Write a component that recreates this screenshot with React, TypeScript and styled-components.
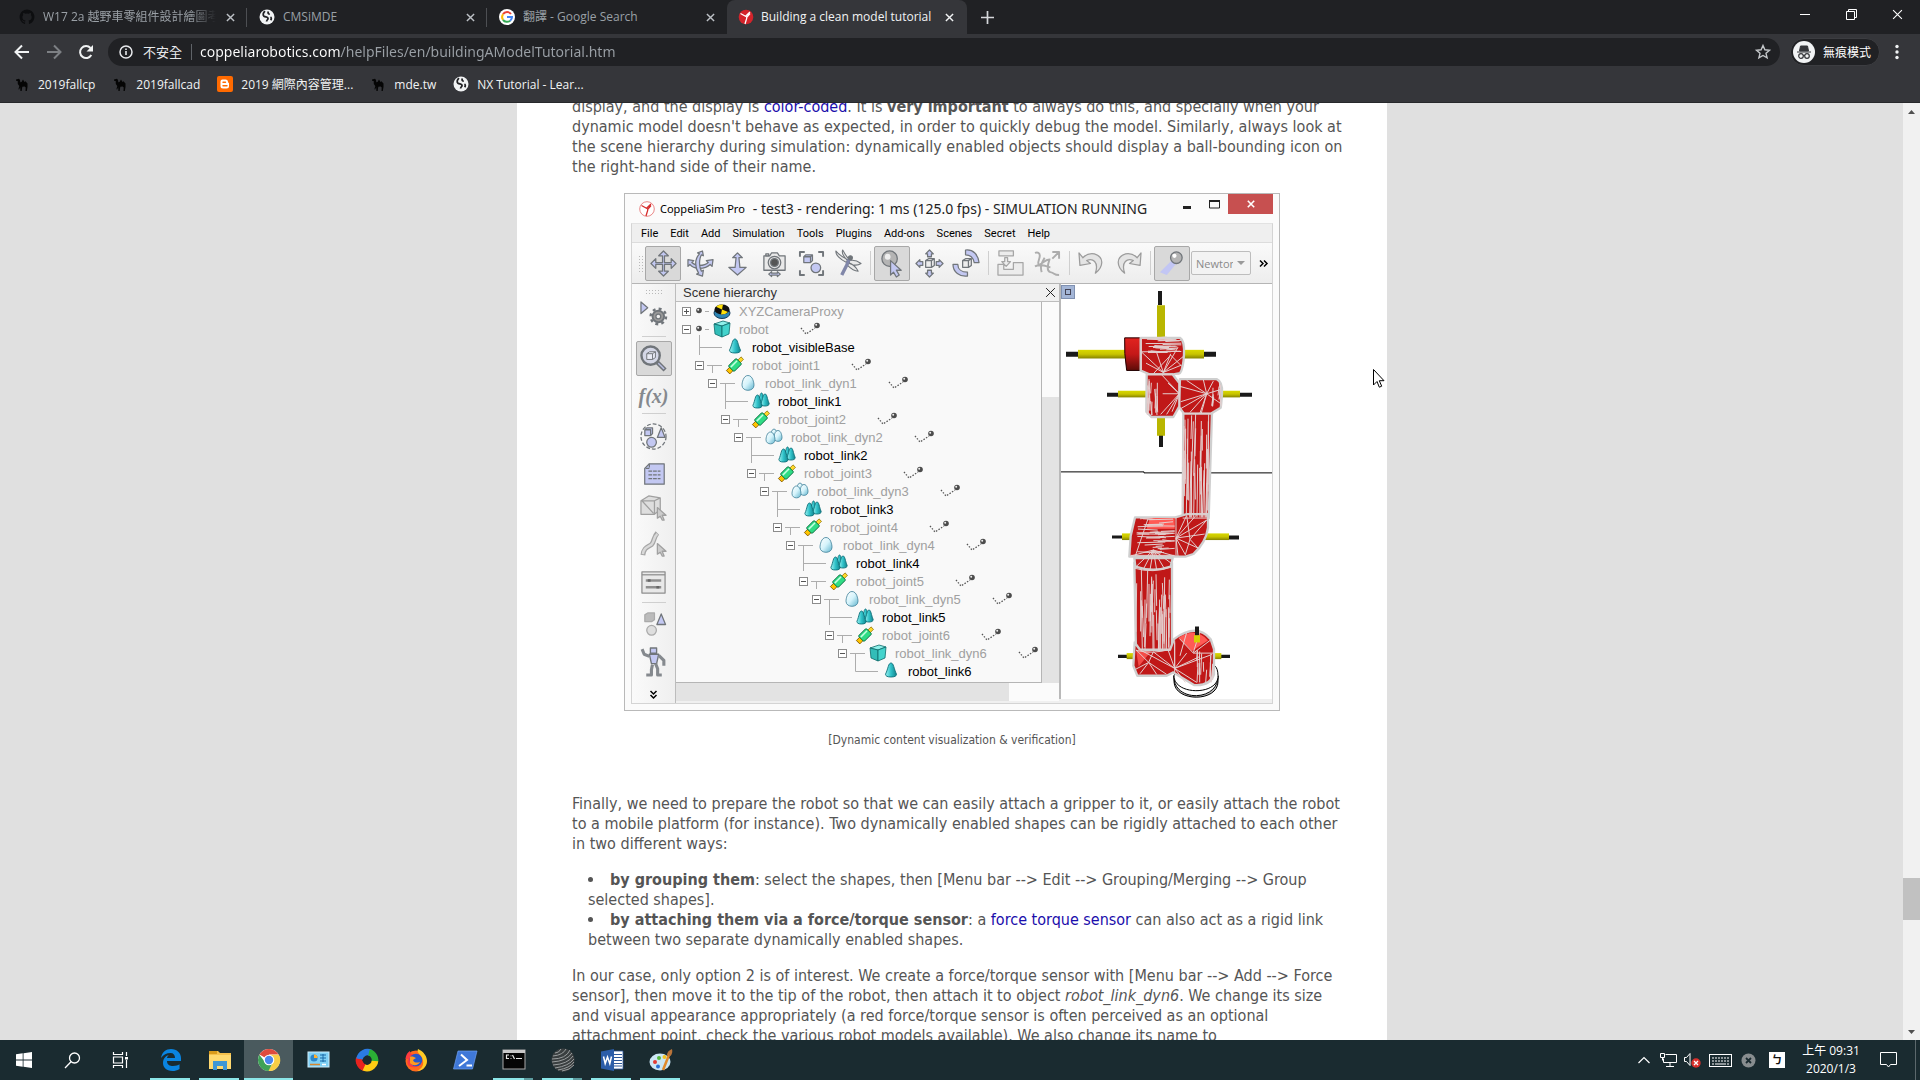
import React from "react";
import styled, { createGlobalStyle, css } from "styled-components";

const UI = `"Open Sans", "Noto Sans CJK TC", sans-serif`;
const BODY = `"DejaVu Sans Condensed", "DejaVu Sans", "Noto Sans CJK TC", sans-serif`;

const Global = createGlobalStyle`
  * { box-sizing: border-box; }
  html, body, #root { height: 100%; margin: 0; }
  body { font-family: ${UI}; background: #e0e0e0; overflow: hidden; }
  button { border: 0; padding: 0; margin: 0; background: none; color: inherit; font: inherit; }
  svg { display: block; flex: none; overflow: visible; }
`;

const Screen = styled.div`display: flex; flex-direction: column; height: 100vh;`;

/* ---------- browser chrome ---------- */
const TabStrip = styled.header`
  display: flex; height: 34px; padding-left: 7px; background: #202124; color: #9aa0a6;
`;
const Tab = styled.div<{ $active?: boolean; $line?: boolean }>`
  position: relative; display: flex; align-items: center; width: 240px; padding: 0 11px 0 12px; gap: 8px; font-size: 12px;
  ${(p) => p.$active && css`background: #35363a; color: #f1f3f4; border-radius: 8px 8px 0 0; padding: 0 12px 0 11px; gap: 7px;`}
  ${(p) => p.$line && css`&::after { content: ""; position: absolute; right: 0; top: 8px; width: 1px; height: 19px; background: #4d4f53; }`}
`;
const TabTitle = styled.button<{ $fade?: boolean }>`
  flex: 1; overflow: hidden; white-space: nowrap; text-align: left; line-height: 20px;
  ${(p) => p.$fade && css`mask-image: linear-gradient(90deg, #000 85%, transparent);`}
`;
const IconButton = styled.button<{ $w: number; $color?: string }>`
  display: flex; align-items: center; justify-content: center; flex: none; width: ${(p) => p.$w}px; height: 100%;
  color: ${(p) => p.$color || "#f1f3f4"};
`;
const WindowButtons = styled.div`display: flex; height: 28px; margin-left: auto;`;
const Toolbar = styled.div`
  display: flex; align-items: center; height: 36px; padding: 4px 6px; background: #35363a;
`;
const Omnibox = styled.div`
  display: flex; align-items: center; flex: 1; height: 28px; margin: 0 10px 0 6px; padding: 0 8px 0 11px;
  border-radius: 14px; background: #202124; color: #e8eaed; font-size: 13px;
`;
const Insecure = styled.span`margin-left: 10px; padding-right: 9px; border-right: 1px solid #5f6368; line-height: 16px; white-space: nowrap;`;
const Url = styled.input`
  flex: 1; margin-left: 8px; padding: 0; border: 0; outline: 0; font: 14px/20px "Noto Sans", ${UI}; color: transparent;
  background: linear-gradient(90deg, #ffffff 141px, #9aa0a6 141px); background-clip: text; -webkit-background-clip: text;
`;
const Incognito = styled.button`
  display: flex; align-items: center; gap: 8px; height: 28px; padding: 0 8px 0 2px; border: 1px solid #3c3d41; border-radius: 14px;
  background: #202124; color: #fff; font-size: 12px;
`;
const Bookmarks = styled.nav`
  display: flex; align-items: center; height: 33px; padding: 0 14px 4px; gap: 17px; background: #35363a;
  border-bottom: 1px solid #27282b; color: #f1f3f4; font-size: 12px;
`;
const Bookmark = styled.a`display: flex; align-items: center; gap: 8px; color: inherit; text-decoration: none; white-space: nowrap;`;

/* ---------- page ---------- */
const Viewport = styled.div`display: flex; flex: 1; min-height: 0; background: #e0e0e0;`;
const Page = styled.main`flex: 1; overflow: hidden; display: flex; justify-content: center; align-items: flex-start;`;
const Article = styled.article`
  width: 870px; margin: -6px 0 0 1px; padding: 0 40px 0 55px; background: #fff; color: #555;
  font: 16px/20px ${BODY}; white-space: nowrap;
`;
const P = styled.p`margin: 0 0 16px;`;
const Link = styled.a`color: #1a0dab; text-decoration: none;`;
const List = styled.ul`margin: 0 0 16px; padding-left: 16px; list-style-position: inside;`;
const Figure = styled.figure`margin: 0 0 47px 52px; width: 656px;`;
const Caption = styled.figcaption`margin-top: 22px; text-align: center; font-size: 12px; line-height: 14px;`;
const Scrollbar = styled.aside`display: flex; flex-direction: column; width: 17px; background: #f1f1f1;`;
const ScrollTrack = styled.div`flex: 1; display: flex; flex-direction: column;`;
const ScrollStep = styled.button`display: flex; align-items: center; justify-content: center; width: 17px; height: 17px;`;
const ScrollSpace = styled.div<{ $grow: number }>`flex: ${(p) => p.$grow};`;
const ScrollThumb = styled.div`height: 42px; background: #c1c1c1;`;

/* ---------- simulator window ---------- */
const Sim = styled.section`
  height: 518px; border: 1px solid #b9b9b9; background: #fbfbfb; padding: 0 6px 6px; color: #000;
  display: flex; flex-direction: column; font-family: ${UI};
`;
const SimTitle = styled.div`display: flex; align-items: center; height: 29px; padding-left: 8px; font: 14px "Noto Sans", ${UI}; color: #222;`;
const AppName = styled.span`margin: 0 8px 0 5px; font-size: 11px; color: #000;`;
const SimControls = styled.div`display: flex; align-self: flex-start; margin-left: auto;`;
const CloseBox = styled.button`display: flex; align-items: center; justify-content: center; width: 45px; height: 20px; background: #c75050;`;
const SimBody = styled.div`flex: 1; display: flex; flex-direction: column; border: 1px solid #d4d4d4; border-top-color: #e2e2e2; background: #f0f0f0; min-height: 0;`;
const MenuBar = styled.div`display: flex; height: 18px; padding-left: 9px; gap: 12px; align-items: center; background: #efefef; font: 11px Roboto, ${UI};`;
const SimTools = styled.div`
  display: flex; align-items: center; height: 42px; padding-left: 6px; gap: 1px; border-top: 1px solid #dcdcdc; border-bottom: 1px solid #b5b5b5;
  background: linear-gradient(#fafafa, #ededed);
`;
const ToolButton = styled.button<{ $on?: boolean }>`
  display: flex; align-items: center; justify-content: center; flex: none; width: 36px; height: 35px;
  border: 1px solid ${(p) => (p.$on ? "#a8a8a8" : "transparent")}; border-radius: 2px;
  background: ${(p) => (p.$on ? "#d9d9d9" : "transparent")};
`;
const Sep = styled.i<{ $side?: boolean }>`
  flex: none; background: #cfcfcf;
  ${(p) => (p.$side ? css`width: 24px; height: 1px;` : css`width: 1px; height: 24px; margin: 0 2px 0 3px;`)}
`;
const Grip = styled.i<{ $side?: boolean }>`
  flex: none; width: ${(p) => (p.$side ? 17 : 5)}px; height: ${(p) => (p.$side ? 5 : 17)}px; margin-right: ${(p) => (p.$side ? 0 : 1)}px;
  background: radial-gradient(circle, #b9b9b9 1px, transparent 1px) 0 0 / 3px 3px;
`;
const Engine = styled.select`
  appearance: none; width: 60px; height: 24px; padding: 0 17px 0 4px; border: 1px solid #bdbdbd; border-radius: 2px;
  font: 11px ${UI}; color: #8a8a8a; background: #f3f3f3;
`;
const EngineBox = styled.label`
  position: relative; display: flex;
  &::after { content: ""; position: absolute; right: 6px; top: 10px; border: 4px solid transparent; border-top-color: #9a9a9a; border-bottom: 0; }
`;
const SimMain = styled.div`flex: 1; display: flex; min-height: 0;`;
const Side = styled.div`
  display: flex; flex-direction: column; align-items: center; width: 44px; padding-top: 5px; border-right: 1px solid #bcbcbc;
  background: linear-gradient(90deg, #fafafa, #efefef);
`;
const SideSlot = styled.div<{ $h: number }>`display: flex; align-items: center; justify-content: center; flex: none; height: ${(p) => p.$h}px;`;
const Hierarchy = styled.div`display: flex; flex-direction: column; width: 383px; margin-bottom: 2px; font: 13px "Liberation Sans", sans-serif; color: #333;`;
const HierarchyHead = styled.div`display: flex; align-items: center; justify-content: space-between; height: 18px; padding-left: 7px; border-bottom: 1px solid #bdbdbd; background: #f0f0f0;`;
const TreeArea = styled.div`display: flex; flex: 1; min-height: 0;`;
const Tree = styled.div`flex: 1; overflow: hidden; background: #f9f9f9; border-right: 1px solid #b5b5b5; border-bottom: 1px solid #b5b5b5;`;
const TreeRow = styled.div<{ $level: number; $leaf?: boolean }>`
  display: flex; align-items: center; height: 18px; padding-left: ${(p) => 6 + p.$level * 13}px; color: ${(p) => (p.$leaf ? "#000" : "#a0a0a0")};
`;
const Expander = styled.button`
  display: flex; align-items: center; justify-content: center; flex: none; width: 9px; height: 9px; border: 1px solid #8c8c8c; background: #fff;
`;
const NodeName = styled.span`margin-left: 7px;`;
const VBar = styled.div`width: 17px; display: flex; flex-direction: column; background: #fbfbfb;`;
const VThumb = styled.div`margin-top: 95px; flex: 1; background: #e3e3e3;`;
const HBar = styled.div`height: 18px; padding-right: 50px; background: #fbfbfb;`;
const HThumb = styled.div`height: 100%; background: #e3e3e3;`;
const View3D = styled.div`flex: 1; position: relative; margin-bottom: 4px; padding-top: 1px; border-left: 2px solid #b9b9b9; background: #fff;`;
const ViewPin = styled.button`position: absolute; left: 0; top: 1px; width: 14px; height: 14px; background: #a3b5d6; border: 1px solid #7f90b0; display: flex; align-items: center; justify-content: center;`;

/* ---------- taskbar ---------- */
const Taskbar = styled.footer`display: flex; height: 40px; background: #1a2b30; color: #fff;`;
const TaskButton = styled.button<{ $w: number; $run?: boolean; $active?: boolean; $stack?: boolean }>`
  position: relative; display: flex; align-items: center; justify-content: center; width: ${(p) => p.$w}px; height: 40px;
  background: ${(p) => (p.$active ? "#4a5a5e" : "none")};
  ${(p) => p.$run && css`&::after { content: ""; position: absolute; bottom: 0; left: ${p.$active ? 0 : 4}px; right: ${p.$active ? 0 : 5}px; height: 2px;
    background: ${p.$stack ? "linear-gradient(90deg, #8ce6e8 31px, #5d9da0 31px)" : "#8ce6e8"}; }`}
`;
const Apps = styled.div`display: flex; margin-left: 2px;`;
const Tray = styled.div`display: flex; align-items: center; margin-left: auto; padding-right: 4px;`;
const Clock = styled.button`width: 74px; margin-right: 6px; text-align: center; font-size: 12px; line-height: 18px; white-space: nowrap;`;
const Ime = styled.span`width: 16px; height: 16px; background: #fff; color: #111; font: bold 11px/15px "Noto Sans CJK TC", sans-serif; text-align: center;`;
const DesktopEdge = styled.i`width: 1px; height: 40px; margin-left: 13px; background: #5c686c;`;
const PointerLayer = styled.div`position: fixed; left: 1373px; top: 369px; pointer-events: none;`;

/* ---------- small drawings ---------- */
const Svg = (p: any) => {
  const { s = 16, w, h, vb, ...r } = p;
  return <svg width={w || s} height={h || s} viewBox={vb || `0 0 ${w || s} ${h || s}`} fill="none" aria-hidden="true" {...r} />;
};
const CloseX = ({ s = 9, c = "currentColor", sw = 1.6 }: any) => (
  <Svg s={s} vb="0 0 10 10"><path d="M1 1l8 8M9 1l-8 8" stroke={c} strokeWidth={sw} /></Svg>
);
const Globe = () => (
  <Svg vb="0 0 16 16"><circle cx="8" cy="8" r="7.500" fill="#f1f3f4" />
    <path d="M6 2.200C4 4 3.600 6 5 7.200c1.400 1 3.400.6 4 2 .4 1.400-1.400 1.600-1.400 3.300M9.500 2.500c-1 1.500-.2 2.700 1.200 2.500M11.500 8c1 .6 1 2.200.2 3.200" stroke="#202124" strokeWidth="1.800" /></Svg>
);
const Octocat = () => (
  <Svg vb="0 0 16 16"><path fill="#0d0e10" d="M8 .5a7.500 7.500 0 0 0-2.400 14.600c.4.100.5-.2.5-.4v-1.400c-2 .4-2.500-.9-2.600-1.200-.2-.4-.6-.9-.9-1.100 1-.2 1.500.8 1.800 1.100.5.800 1.300.7 1.800.5 0-.4.200-.8.400-1C4.900 11.400 3.400 10.800 3.400 8c0-.8.300-1.500.8-2-.2-.6-.2-1.400.1-2 0 0 .8 0 2 .8a7 7 0 0 1 3.500 0c1.200-.8 2-.8 2-.8.3.6.3 1.400.1 2 .5.5.8 1.200.8 2 0 2.800-1.700 3.400-3.300 3.600.3.300.5.800.5 1.400v1.700c0 .2.1.5.500.400A7.500 7.500 0 0 0 8 .5Z" /></Svg>
);
const GoogleG = () => (
  <Svg vb="0 0 16 16"><circle cx="8" cy="8" r="8" fill="#fff" />
    <path d="M12 5A5 5 0 0 0 4 5.200" stroke="#ea4335" strokeWidth="2" /><path d="M4 5.200a5 5 0 0 0 0 5.600" stroke="#fbbc05" strokeWidth="2" />
    <path d="M4 10.800a5 5 0 0 0 7.200.9" stroke="#34a853" strokeWidth="2" /><path d="M11.200 11.700A4.600 4.600 0 0 0 13 8H8" stroke="#4285f4" strokeWidth="2" /></Svg>
);
const CoppeliaMark = ({ red = false }: any) => (
  <Svg vb="0 0 16 16"><circle cx="8" cy="8" r="7.300" fill={red ? "#d3242b" : "#fff"} stroke={red ? "none" : "#e56a6a"} strokeWidth=".8" />
    <path d="M2.500 4.500l5 2.700L12 3M7.500 7.200c1.800.5 1.300 2.500.6 4L7 15M9 8l3-3.500" stroke={red ? "#fff" : "#d62c2c"} strokeWidth="1.300" /></Svg>
);
const Camel = () => (
  <Svg vb="0 0 16 16"><path fill="#050505" d="M2 3.500l3-.7 1 1.200.3 2.200L7.500 6 9 3.500 10.500 6l1-.8 2 2.300v3.500l-.7 4h-1.300l.2-3.500-1-1-2.400.300-.6 4.200H6.400l-.2-3.700L5 13.700l-.5-.7.8-3-1.500-2L3.700 5 2 4.700Z" /></Svg>
);
const Blogger = () => (
  <Svg vb="0 0 16 16"><rect width="16" height="16" rx="2" fill="#ff6a00" /><path d="M5.500 3.500h3a2.500 2.500 0 0 1 2.500 2.500c0 1 1 .8 1 1.500v2.500a2.500 2.500 0 0 1-2.500 2.500H6a2.500 2.500 0 0 1-2.500-2.500V5.500a2 2 0 0 1 2-2Z" fill="#fff" /><path d="M6 6.300h2.500M6 9.800h4" stroke="#ff6a00" strokeWidth="1.400" strokeLinecap="round" /></Svg>
);

const L = "#c3c8f2", G = "#70757a";
const glyph: Record<string, React.ReactNode> = {
  move: <path d="M14 1l5 5h-4v7h7V9l5 5-5 5v-4h-7v7h4l-5 5-5-5h4v-7H6v4l-5-5 5-5v4h7V6H9Z" />,
  rotate: <><path d="M1 10l6 1-2 2c2 2 5 3 8 3 4 0 7-1 9-3l-2-2 7-1-1 7-2-2c-3 3-7 4-11 4s-8-1-10-4l-2 2Z" /><path d="M16 1l1 5-2-1c-2 3-2 6-2 9 0 4 1 6 2 8l2-1-1 6-6-2 2-1c-2-3-3-6-3-10s1-7 4-10l-2-1Z" /></>,
  updown: <path d="M14 3l5 5h-3.500l1 10H23l-9 8-9-8h6.500l1-10H9Z" />,
  camera: <><path d="M3 6h6l2-3h6l2 3h6v15H3Z" fill="#e9e9e9" /><path d="M5 4h3v2H5Z" fill="#ddd" /><circle cx="14" cy="13" r="6.500" fill="#ddd" /><circle cx="14" cy="13" r="4" fill="#555" /><path d="M8 25l3-2.500V24h6v-1.500l3 2.500-3 2.500V26h-6v1.500Z" /></>,
  fit: <><path d="M2 7V2h5M21 2h5v5M26 21v5h-5M7 26H2v-5" fill="none" strokeWidth="2" /><path d="M6 7l2-2h7v6l-2 2H6ZM6 7h7v6M13 7l2-2" /><circle cx="18.500" cy="18.500" r="5" /></>,
  fly: <><path d="M13 10C9 8 4 5 1 1c-1 4 5 9 11 12ZM14 9C11 6 10 3 8 0c-2 4 2 8 5 11ZM15 11c4-1 8 0 12 3-3 2-8 2-12 0ZM14 13c5 2 8 5 10 9-4 0-8-3-11-6Z" fill="#e9e9e9" strokeWidth="1.100" /><path d="M15 9l-3 7-5 10" strokeWidth="3.500" stroke="#8086a8" /><circle cx="16" cy="8" r="2" fill="#70757a" /></>,
  pick: <><circle cx="11" cy="9" r="8" fill="#b4b4b4" /><circle cx="9" cy="7" r="3" fill="#eee" stroke="none" /><path d="M12 11l11 10h-5l3 5-3 2-3-5-3 3Z" /></>,
  shift: <><path d="M10 11l3-2h6v7l-3 2h-6ZM10 11h6v7M16 11l3-2" fill="#eee" /><path d="M14 0l4 4h-2v3h-4V4h-2ZM14 28l4-4h-2v-3h-4v3h-2ZM0 14l4-4v2h3v4H4v2ZM28 14l-4-4v2h-3v4h3v2Z" /></>,
  spin: <><path d="M10 11l3-2h6v7l-3 2h-6ZM10 11h6v7M16 11l3-2" fill="#eee" /><path d="M13 0c8-1 13 5 14 13h-5c-1-5-4-8-9-8ZM0 15h5c0 5 4 8 10 8v4C7 28 0 23 0 15Z" /></>,
  assemble: <g fill="#ececec" stroke="#a6a6a6"><path d="M2 1h15v5H2ZM1 26V15h6v5h10v-7h10v13ZM8 8h3v4h3l-4.500 5L5 12h3Z" /></g>,
  transfer: <g fill="none" stroke="#adadad"><path d="M1 3c3-1 5 0 5 3s-3 8-1 9 7-6 12-5M1 17c6-3 12 0 16 1M11 8c-3 5-5 9-3 15M16 10c-2 6-3 12 1 13 5 1 3 3 9 3" strokeWidth="2" /><path d="M19 9l6-6M19 2h7v7" strokeWidth="2" /></g>,
  undo: <path d="M1 3l1 13 11-2-4-3c6-3 13 1 9 13 9-7 9-17-1-20-5-1-9 1-12 4Z" fill="#e4e4e4" stroke="#9c9c9c" />,
  redo: <path d="M27 3l-1 13-11-2 4-3C13 8 6 12 10 24 1 17 1 7 11 4c5-1 9 1 12 4Z" fill="#e4e4e4" stroke="#9c9c9c" />,
  ball: <><path d="M18 14L8 26l-7-3L15 9Z" fill="#bcc1fa" stroke="none" opacity=".8" /><circle cx="18" cy="8" r="6" fill="#b4b4b4" /><circle cx="16" cy="6" r="2.200" fill="#fff" stroke="none" /></>,
  gear: <><path d="M1 0l7 6-7 6Z" /><circle cx="19" cy="15" r="6" fill="#999" strokeWidth="2" /><circle cx="19" cy="15" r="8" fill="none" strokeWidth="2.500" strokeDasharray="3 3.300" /><circle cx="19" cy="15" r="2.500" fill="#eee" /></>,
  zoom: <><circle cx="11" cy="11" r="9.500" fill="#d4d7e6" strokeWidth="2.500" /><path d="M7 9l3-2h6v6l-3 2H7ZM7 9h6v6M13 9l3-2" fill="#e9ebf5" strokeWidth="1" /><path d="M18 18l8 8" strokeWidth="4.500" /><path d="M19 19l6 6" stroke="#b9bee0" strokeWidth="1.500" /></>,
  parts: <><circle cx="14" cy="14" r="13" fill="none" strokeDasharray="4 2" /><path d="M5 7l2-2h6v6l-2 2H5ZM5 7h6v6" /><circle cx="12" cy="20" r="5" /><path d="M22 5l4 10h-8Z" /></>,
  doc: <><path d="M9 3h16v22H4V8Z" /><path d="M9 3v5H4M8 11h13M8 15h13M8 19h13" fill="none" strokeDasharray="4 1" /></>,
  boxcur: <g fill="#dedede" stroke="#a0a0a0"><path d="M1 6l8-5 12 2v12l-6 5H1ZM1 6h14v14M15 6l6-3M2 6l12 13" /><path d="M18 13l9 8h-4l2 5h-2l-2-4-3 2Z" fill="#ccc" /></g>,
  curve: <><path d="M3 25c1-8 5-8 9-11 3-3 2-8 6-12" fill="none" stroke="#a6a6a6" strokeWidth="5" /><path d="M3 24c1-7 5-7 9-10 3-3 2-8 6-11" fill="none" stroke="#d9d9d9" strokeWidth="2.500" /><path d="M18 13l9 8h-4l2 5h-2l-2-4-3 2Z" fill="#ccc" stroke="#a0a0a0" /></>,
  panel: <g fill="#e8e8e8" stroke="#8e8e8e"><rect x="2" y="3" width="24" height="22" /><path d="M2 6h24" /><path d="M6 12h16M6 19h16" strokeWidth="2.500" /><path d="M8 12h3M17 19h3" stroke="#666" strokeWidth="2.500" /></g>,
  shapes: <><path d="M5 4l3-2h7v7l-3 2H5Z" fill="#bbb" stroke="#aaa" /><circle cx="12" cy="20" r="5" fill="#dedede" stroke="#aaa" /><path d="M22 3l4.500 11h-9Z" /></>,
  person: <><path d="M11 1h6v5h-6ZM10 7h9l-2 9h-5Z" /><path d="M10 9L5 7 3 2M19 8l5 5v5M13 17l-1 5v5H7M16 16l2 5v6h4" fill="none" strokeWidth="3" stroke="#85898e" /></>,
};
const Tool = ({ n, s = 27 }: any) => <Svg s={s} vb="0 0 28 28" fill={L} stroke={G} strokeWidth="1.300" strokeLinejoin="round">{glyph[n]}</Svg>;
const Fx = styled.span`font: italic bold 20px "Liberation Serif", serif; color: #85898e;`;

/* ---------- tree ---------- */
type Kind = "cam" | "cube" | "cone" | "joint" | "egg" | "eggs" | "cones";
const nodes: [string, number, Kind][] = [["XYZCameraProxy", 0, "cam"], ["robot", 0, "cube"], ["robot_visibleBase", 1, "cone"]];
(["egg", "eggs", "eggs", "egg", "egg", "cube"] as Kind[]).forEach((dyn, i) => {
  const n = i + 1, lv = 1 + i * 2;
  nodes.push([`robot_joint${n}`, lv, "joint"], [`robot_link_dyn${n}`, lv + 1, dyn], [`robot_link${n}`, lv + 2, n === 6 ? "cone" : "cones"]);
});
const Cone = ({ x, y = 1, w = 5.5, h = 14 }: any) => (
  <path d={`M${x} ${y}C${x + w * 0.5} ${y} ${x + w * 0.5} ${y + h * 0.4} ${x + w} ${y + h * 0.8}Q${x + w} ${y + h} ${x} ${y + h}T${x - w} ${y + h * 0.8}C${x - w * 0.5} ${y + h * 0.4} ${x - w * 0.5} ${y} ${x} ${y}Z`} fill="url(#teal)" stroke="#0d6f78" strokeWidth=".9" />
);
const Egg = ({ x, y, rx, ry }: any) => (
  <path d={`M${x} ${y - ry}C${x + rx * 0.8} ${y - ry} ${x + rx} ${y} ${x + rx} ${y + ry * 0.3}C${x + rx} ${y + ry * 1.2} ${x - rx} ${y + ry * 1.2} ${x - rx} ${y + ry * 0.3}C${x - rx} ${y} ${x - rx * 0.8} ${y - ry} ${x} ${y - ry}Z`} fill="url(#ice)" stroke="#3c7f98" strokeWidth=".8" />
);
const KindIcon = ({ k }: { k: Kind }) => (
  <Svg w={20} h={18}>
    {k === "cam" && <><ellipse cx="10" cy="11" rx="8" ry="5.500" fill="#2d86b6" stroke="#143c5a" /><ellipse cx="10" cy="7.500" rx="7.500" ry="5" fill="#111" /><path d="M10 7.500L4 4.800A8 5 0 0 1 11 2.500ZM10 7.500l6 2.500A8 5 0 0 1 9 12.500Z" fill="#ffe10a" /></>}
    {k === "cube" && <g stroke="#0c6a6a" strokeWidth=".8"><path d="M2 4l9-3 7 2-8 3Z" fill="#8ff0ea" /><path d="M2 4l8 2v11l-7-3Z" fill="#32bdb8" /><path d="M10 6l8-3-1 11-7 3Z" fill="#43d3cc" /></g>}
    {k === "cone" && <Cone x={10} />}
    {k === "cones" && <><Cone x={10.5} y={1} w={3} h={10} /><Cone x={14} y={2} w={4.2} h={12} /><Cone x={6.5} y={3} w={4.6} h={13} /></>}
    {k === "egg" && <Egg x={10} y={9} rx={6} ry={7.5} />}
    {k === "eggs" && <><Egg x={10} y={5.5} rx={3} ry={4.5} /><Egg x={14} y={8} rx={4} ry={5.5} /><Egg x={6.5} y={10} rx={4.5} ry={6} /></>}
    {k === "joint" && <g transform="rotate(-45 10 9)"><rect x="0" y="6.800" width="5" height="4.800" fill="#ffc400" stroke="#7a5200" strokeWidth=".8" /><rect x="15" y="7.500" width="5" height="3.500" fill="#ffd92a" stroke="#8a6a00" strokeWidth=".7" /><rect x="4.500" y="5" width="11" height="8" rx="1" fill="#2fdc85" stroke="#0b6b40" strokeWidth=".9" /><path d="M5.500 7.500h9" stroke="#c4ffe0" strokeWidth="1.500" /></g>}
  </Svg>
);
const Ball = ({ x, y }: any) => <><circle cx={x} cy={y} r="2.800" fill="#4c4c4c" /><circle cx={x - 0.8} cy={y - 0.8} r="1" fill="#eee" /></>;
const line = { stroke: "#adadad", strokeWidth: 1 };
const TreeNode = ({ n }: { n: [string, number, Kind] }) => {
  const [name, lv, k] = n;
  const leaf = k === "cone" || k === "cones";
  return (
    <TreeRow $level={lv} $leaf={leaf}>
      {leaf ? (
        <Svg w={30} h={18}><path d={`M4.500 -3V${name === "robot_link6" ? 9.5 : 17}M4.500 9.500H27`} {...line} /></Svg>
      ) : (
        <>
          <Expander aria-label={`Toggle ${name}`}><Svg s={7}><path d={k === "cam" ? "M1 3.500h5M3.500 1v5" : "M1 3.500h5"} stroke="#555" /></Svg></Expander>
          <Svg w={21} h={18}>{lv === 0 ? <><Ball x={8} y={8.5} /><path d="M14 9.500h4" {...line} /></> : <path d="M3 9.500H18M8.500 9.500V17" {...line} />}</Svg>
        </>
      )}
      <KindIcon k={k} />
      <NodeName>{name}</NodeName>
      {!leaf && k !== "cam" && <Svg w={52} h={18}><path d="M32 8l5 6 9-6" stroke="#555" strokeWidth="1.300" strokeDasharray="1.500 1.500" /><Ball x={48} y={5.5} /></Svg>}
    </TreeRow>
  );
};

/* ---------- robot ---------- */
const rnd = (seed: number) => () => ((seed = (seed * 16807) % 2147483647) / 2147483647);
const streaks = (x1: number, y1: number, x2: number, y2: number, w: number, n: number, seed: number, horizontal = false) => {
  const r = rnd(seed);
  let d = "";
  for (let i = 0; i < n; i++) {
    const u = (r() * 2 - 1) * w, v = u + (r() - 0.5) * 8, a = r() * 0.7, b = Math.min(1, a + 0.2 + r() * 0.6);
    const px = x1 + (x2 - x1) * a, py = y1 + (y2 - y1) * a, qx = x1 + (x2 - x1) * b, qy = y1 + (y2 - y1) * b;
    d += horizontal ? `M${px | 0} ${(py + u) | 0}L${qx | 0} ${(qy + v) | 0}` : `M${(px + u) | 0} ${py | 0}L${(qx + v) | 0} ${qy | 0}`;
  }
  return d;
};
const fan = (x: number, y: number, pts: number[]) => {
  let d = "";
  for (let i = 0; i < pts.length; i += 2) d += `M${x} ${y}L${pts[i]} ${pts[i + 1]}`;
  return d;
};
const Robot = () => (
  <svg width="100%" height="100%" viewBox="63 15 633 1245" preserveAspectRatio="none" role="img" aria-label="Robot arm">
    <defs>
      <linearGradient id="tubeH" x1="0" x2="0" y1="0" y2="1"><stop offset="0" stopColor="#d8d800" /><stop offset=".5" stopColor="#c8c400" /><stop offset="1" stopColor="#858200" /></linearGradient>
      <linearGradient id="redV" x1="0" x2="0" y1="0" y2="1"><stop offset="0" stopColor="#e2231f" /><stop offset=".5" stopColor="#c41818" /><stop offset="1" stopColor="#5c0c08" /></linearGradient>
    </defs>
    <path d="M63 577H312V580H696" stroke="#000" strokeWidth="3" fill="none" />
    <g fill="#1a1a1a">
      <path d="M354 33h12v42h-12ZM78 216h38v15H78ZM490 216h38v15h-38ZM201 339h36v12h-36ZM598 339h38v12h-38ZM357 466h12v36h-12ZM216 768h32v9h-32ZM565 768h32v12h-32ZM234 1127h30v10h-30ZM540 1127h30v10h-30Z" />
    </g>
    <path d="M351 76h24v98h-24ZM351 414h24v54h-24Z" fill="#b9b600" />
    <g fill="url(#tubeH)"><rect x="114" y="210" width="144" height="26" /><rect x="430" y="210" width="62" height="26" /><rect x="234" y="333" width="90" height="20" /><rect x="545" y="333" width="55" height="20" /><rect x="246" y="762" width="30" height="20" /><rect x="488" y="762" width="79" height="20" /><rect x="260" y="1122" width="22" height="18" /><rect x="522" y="1122" width="22" height="18" /></g>
    <path d="M402 1190c-4 80 134 80 132 0v18c0 62-130 62-132 0Z" fill="#b9b9b9" stroke="#000" strokeWidth="3" />
    <path d="M402 1190c0 60 134 60 132 0 0-16-4-25-10-30L410 1170Z" fill="#fff" stroke="#000" strokeWidth="3" />
    <path d="M254 174h50v98h-44Q252 220 254 174Z" fill="url(#redV)" stroke="#200" strokeWidth="3" />
    <g fill="#c01818" stroke="#cfcfcf" strokeWidth="7" strokeLinejoin="round">
      <path d="M430 398H516L506 716H428Z" />
      <path d="M283 850H396V1120H288Z" />
      <path d="M302 174H420Q434 182 432 224T420 280L400 284H330L302 272Z" />
      <path d="M420 298H530Q548 306 546 340T542 384L512 402H432L416 380Z" />
      <path d="M320 284H398L418 310V380L400 412H334L319 396Z" />
      <path d="M285 714H406L440 704H504V745Q498 790 460 824L436 832H268L272 770Z" />
      <path d="M283 836H398L392 862Q340 880 286 862Z" />
      <path d="M284 1090L300 1112H390L402 1080Q470 1030 512 1080L522 1110V1186Q510 1222 462 1218L400 1180L380 1190H292L280 1160Z" />
    </g>
    <g fill="#ff5a55"><path d="M330 716h74v32h-84ZM416 1076q52-34 88 8l-48 32Z" /><path d="M288 1112l44 6-36 44Z" opacity=".8" /></g>
    <g stroke="#e3cfcf" strokeWidth="3" fill="none">
      <path d={streaks(470, 400, 466, 714, 37, 36, 77)} />
      <path d={streaks(341, 866, 340, 1112, 50, 40, 93)} />
      <path d={streaks(306, 197, 424, 197, 22, 24, 31, true)} />
      <path d={streaks(338, 290, 338, 406, 17, 16, 58)} />
      <path d={streaks(290, 770, 404, 770, 52, 34, 44, true)} />
      <path d={streaks(496, 1110, 496, 1210, 24, 16, 12)} />
      <path d={streaks(532, 306, 530, 380, 12, 10, 19)} />
      <path d={fan(370, 278, [304, 216, 318, 250, 350, 218, 392, 222, 414, 202, 430, 230, 424, 256])} />
      <path d="M304 216L420 214M304 176V270M320 284H418M340 282L392 226L428 262" />
      <path d={fan(418, 342, [366, 286, 384, 310, 362, 404, 380, 404, 396, 396, 368, 342])} />
      <path d={fan(500, 342, [420, 320, 440, 302, 490, 300, 520, 304, 540, 330, 540, 370, 484, 400, 450, 398, 422, 366])} />
      <path d="M428 401H514M418 296V388M420 388L500 342L480 400M428 716H506" />
      <path d={fan(408, 776, [440, 708, 470, 706, 500, 722, 494, 764, 474, 806, 436, 826, 414, 830])} />
      <path d="M440 708L450 780L500 722M450 780L474 806M450 780L436 826" />
      <path d={fan(340, 812, [272, 830, 286, 864, 310, 870, 330, 872, 350, 872, 372, 866, 394, 852, 404, 830])} />
      <path d="M408 712V830M324 718L286 830M280 866Q340 884 396 862M272 828H404" />
      <path d={fan(404, 1168, [300, 1112, 340, 1118, 384, 1112, 404, 1090, 440, 1122, 480, 1132, 516, 1126, 470, 1210, 436, 1210])} />
      <path d={fan(326, 1150, [288, 1112, 300, 1184, 350, 1186, 380, 1186, 340, 1118, 288, 1170])} />
      <path d="M288 1114Q340 1126 392 1110M404 1084V1184M418 1078L460 1122H522M460 1122L510 1084M440 1060L420 1130M480 1056L460 1120" />
    </g>
    <path d="M462 1068h18v22h-18Z" fill="#d6d000" /><path d="M465 1042h12v26h-12Z" fill="#1a1a1a" />
  </svg>
);

/* ---------- taskbar icons ---------- */
const T = (p: any) => <Svg s={24} vb="0 0 24 24" {...p} />;
const apps: [string, React.ReactNode, any][] = [
  ["Edge", <T><path d="M2 10C3 4 7 1 12 1c6 0 10 4 10 9v3H8c0 4 3 5 6 5 3 0 5-.8 6.500-1.700V21C18 22.500 16 23 13.500 23 7 23 4 19 4 15c0-4 2-7 6-8-1.500 1-2 2.500-2 3h8c0-3-1.500-5-4.500-5C7.500 5 4.500 6.500 2 10Z" fill="#0a84e0" /></T>, { $run: true }],
  ["File Explorer", <T><path d="M1 3h9l2 2h11v16H1Z" fill="#f5c04c" /><path d="M1 7h22v14H1Z" fill="#ffd970" /><path d="M1 3h8v3H1Z" fill="#d99a1b" /><path d="M5 13h14v9h-4v-4H9v4H5Z" fill="#3f97d6" /></T>, { $run: true }],
  ["Chrome", <T><circle cx="12" cy="12" r="11" fill="#fff" /><path d="M12 12L2.500 6.500A11 11 0 0 1 21.500 6.500H12Z" fill="#de4b3e" /><path d="M21.800 6.800A11 11 0 0 1 11 23l5.500-9L12 6.800Z" fill="#f8ce46" /><path d="M2.300 6.800A11 11 0 0 0 11.500 23L16 14H8Z" fill="#3fa257" /><circle cx="12" cy="12" r="5.300" fill="#fff" /><circle cx="12" cy="12" r="4.200" fill="#4a87ee" /></T>, { $run: true, $active: true }],
  ["Control Panel", <T><rect x="2" y="4" width="21" height="15" fill="#7fd0f5" stroke="#cdeefc" /><circle cx="8" cy="10" r="3.600" fill="#2c86c8" /><path d="M8 10V6.400A3.600 3.600 0 0 1 11.600 10Z" fill="#ffb02e" /><path d="M14 7h6M14 10h6M14 13h6M17 6v8" stroke="#1b6ba8" /><path d="M4 16.500h10" stroke="#d9862b" strokeWidth="1.500" /><path d="M16 16.500h4" stroke="#fff" strokeWidth="1.500" /></T>, {}],
  ["Swirl", <T><g fill="none" strokeWidth="6.500"><path d="M11 20A8 8 0 0 1 4.200 10" stroke="#e8231f" /><path d="M4.500 11A8 8 0 0 1 16 5" stroke="#2a7be4" /><path d="M14 4.300A8 8 0 0 1 19.500 15" stroke="#2bb035" /><path d="M20 13A8 8 0 0 1 8 19" stroke="#ffcc13" /><path d="M9 19.500A8 8 0 0 1 4.600 14" stroke="#e8231f" /></g></T>, {}],
  ["Firefox", <T><circle cx="12" cy="13" r="10.500" fill="#ff6a1c" /><path d="M1.500 11C2 5 6 3 6 3c0 2 1 3 2 3l8 0c3 4 3 12-4 13s-10-2-8-8Z" fill="#ff3b3f" /><circle cx="12" cy="12" r="6.300" fill="#2758c9" /><path d="M14 1c5 2 9 7 9 12 0 6-5 10-10 10 4-2 7-5 6-10-.5-3-1-4-3-6s-3-4-2-6Z" fill="#ffca24" /><path d="M6 9c2-1 4 0 6 1l-3 2c1 3 4 3 7 2-1 3-7 5-10 1Z" fill="#ff9a1f" /></T>, {}],
  ["PowerShell", <T><path d="M5 3h19l-4.500 18H.5Z" fill="#3f78d8" stroke="#6ea0f2" strokeWidth=".7" /><path d="M8 6.500l6 5.500-8 6M13.500 17.500H19" stroke="#fff" strokeWidth="2" /></T>, {}],
  ["Command Prompt", <T><rect x="1" y="2" width="22" height="19" fill="#050505" stroke="#aaa" /><path d="M1 3.500h22" stroke="#c8c8c8" strokeWidth="3" /><path d="M7 7H4.500v3.500H7M9 7.500v.8M9 10v.8M10.500 7l2 4M14 10.500h6" stroke="#e8e8e8" strokeWidth="1.200" /></T>, { $run: true, $stack: true }],
  ["Sphere", <T><circle cx="12" cy="12" r="11.500" fill="#3a3f40" /><g stroke="#9a9e9f" strokeWidth="1"><path d="M2 8q10-1 13-7M1 11q14 0 18-9M1 14Q16 13 21 5M2 17q15-1 20-9M4 20q14-2 19-9M7 22q12-2 16-8M11 23q8-1 12-6M4 5q4 0 6-4" /></g></T>, { $run: true, $stack: true }],
  ["Word", <T><path d="M12 3h11v18H12Z" fill="#fff" stroke="#2b579a" strokeWidth=".8" /><path d="M14 6.500h8M14 9.500h8M14 12.500h8M14 15.500h8M14 18h8" stroke="#2b579a" /><path d="M1 3.500L14 1v22L1 20.500Z" fill="#2b5da8" /><path d="M3.500 8.500l1.700 7L7.500 9l2.300 6.500 1.700-7" stroke="#fff" strokeWidth="1.500" /></T>, { $run: true }],
  ["Paint", <T><ellipse cx="11" cy="14" rx="10.500" ry="8.500" fill="#cbe6f4" /><circle cx="6" cy="14" r="2" fill="#e33b32" /><circle cx="10" cy="10" r="2" fill="#55b83c" /><circle cx="15.500" cy="9" r="2" fill="#f3c11d" /><circle cx="9" cy="18.500" r="2" fill="#2b6fd2" /><path d="M20 7l-6 15" stroke="#e08a2b" strokeWidth="2.500" /><path d="M18 7q0-4 5-6 1 4-1.500 7Z" fill="#b9743a" /></T>, { $run: true }],
];

export default function App() {
  return (
    <Screen>
      <Global />
      <svg width="0" height="0" style={{ position: "absolute" }} aria-hidden="true">
        <defs>
          <linearGradient id="teal"><stop offset="0" stopColor="#9bf2f2" /><stop offset=".5" stopColor="#2fc1c8" /><stop offset="1" stopColor="#12838d" /></linearGradient>
          <linearGradient id="ice" x2="1" y2="1"><stop offset="0" stopColor="#fff" /><stop offset=".5" stopColor="#d4f3fb" /><stop offset="1" stopColor="#5fb3cc" /></linearGradient>
        </defs>
      </svg>
      <TabStrip>
        <Tab $line><Octocat /><TabTitle $fade>W17 2a 越野車零組件設計繪圖考試</TabTitle><IconButton $w={12} aria-label="Close tab" $color="#bdc1c6"><CloseX /></IconButton></Tab>
        <Tab $line><Globe /><TabTitle>CMSiMDE</TabTitle><IconButton $w={12} aria-label="Close tab" $color="#bdc1c6"><CloseX /></IconButton></Tab>
        <Tab><GoogleG /><TabTitle>翻譯 - Google Search</TabTitle><IconButton $w={12} aria-label="Close tab" $color="#bdc1c6"><CloseX /></IconButton></Tab>
        <Tab $active><CoppeliaMark red /><TabTitle>Building a clean model tutorial</TabTitle><IconButton $w={12} aria-label="Close tab"><CloseX /></IconButton></Tab>
        <IconButton $w={40} aria-label="New tab" $color="#d5d7da"><Svg s={13}><path d="M6.500 0v13M0 6.500h13" stroke="currentColor" strokeWidth="1.700" /></Svg></IconButton>
        <WindowButtons>
          <IconButton $w={46} aria-label="Minimize"><Svg s={10}><path d="M0 5.500h10" stroke="#fff" /></Svg></IconButton>
          <IconButton $w={46} aria-label="Restore"><Svg s={11}><path d="M.5 2.500h8v8h-8ZM2.500 2.500v-2h8v8h-2" stroke="#fff" /></Svg></IconButton>
          <IconButton $w={46} aria-label="Close"><CloseX s={11} sw={1} c="#fff" /></IconButton>
        </WindowButtons>
      </TabStrip>
      <Toolbar>
        <IconButton $w={32} aria-label="Back"><Svg><path d="M15 8H2M8 1.500L1.500 8 8 14.500" stroke="currentColor" strokeWidth="2" /></Svg></IconButton>
        <IconButton $w={32} aria-label="Forward" $color="#7d8084"><Svg><path d="M1 8h13M8 1.500L14.500 8 8 14.500" stroke="currentColor" strokeWidth="2" /></Svg></IconButton>
        <IconButton $w={32} aria-label="Reload"><Svg><path d="M13.300 11A6 6 0 1 1 12.500 4" stroke="currentColor" strokeWidth="2" /><path d="M15 1v6.500H8.500Z" fill="currentColor" /></Svg></IconButton>
        <Omnibox>
          <Svg s={14}><circle cx="7" cy="7" r="6" stroke="#e8eaed" strokeWidth="1.500" /><path d="M7 6v4M7 3.500v1.500" stroke="#e8eaed" strokeWidth="1.600" /></Svg>
          <Insecure>不安全</Insecure>
          <Url aria-label="Address" defaultValue="coppeliarobotics.com/helpFiles/en/buildingAModelTutorial.htm" />
          <IconButton $w={18} aria-label="Bookmark this page"><Svg s={16}><path d="M8 1.500l1.900 4.300 4.600.4-3.500 3.100 1.100 4.600L8 11.500l-4.100 2.400L5 9.300 1.500 6.200l4.600-.4Z" stroke="#c4c7ca" strokeWidth="1.400" /></Svg></IconButton>
        </Omnibox>
        <Incognito><Svg s={22}><circle cx="11" cy="11" r="11" fill="#f1f3f4" /><path d="M7.500 5h7l1 5h-9ZM4 11h14" fill="#35363a" stroke="#35363a" /><circle cx="8" cy="15" r="2.300" stroke="#35363a" strokeWidth="1.200" /><circle cx="14" cy="15" r="2.300" stroke="#35363a" strokeWidth="1.200" /><path d="M10 14.500h2" stroke="#35363a" /></Svg>無痕模式</Incognito>
        <IconButton $w={34} aria-label="Menu"><Svg w={4} h={16}><circle cx="2" cy="2.500" r="1.700" fill="#f1f3f4" /><circle cx="2" cy="8" r="1.700" fill="#f1f3f4" /><circle cx="2" cy="13.500" r="1.700" fill="#f1f3f4" /></Svg></IconButton>
      </Toolbar>
      <Bookmarks>
        <Bookmark href="#"><Camel />2019fallcp</Bookmark>
        <Bookmark href="#"><Camel />2019fallcad</Bookmark>
        <Bookmark href="#"><Blogger />2019 網際內容管理...</Bookmark>
        <Bookmark href="#"><Camel />mde.tw</Bookmark>
        <Bookmark href="#"><Globe />NX Tutorial - Lear...</Bookmark>
      </Bookmarks>
      <Viewport>
        <Page>
          <Article>
            <P>
              display, and the display is <Link href="#">color-coded</Link>. It is <b>very important</b> to always do this, and specially when your<br />
              dynamic model doesn't behave as expected, in order to quickly debug the model. Similarly, always look at<br />
              the scene hierarchy during simulation: dynamically enabled objects should display a ball-bounding icon on<br />
              the right-hand side of their name.
            </P>
            <Figure>
              <Sim>
                <SimTitle>
                  <CoppeliaMark /><AppName>CoppeliaSim Pro</AppName>- test3 - rendering: 1 ms (125.0 fps) - SIMULATION RUNNING
                  <SimControls>
                    <IconButton $w={27} aria-label="Minimize window"><Svg w={9} h={20}><path d="M0 13.500h8" stroke="#222" strokeWidth="3" /></Svg></IconButton>
                    <IconButton $w={27} aria-label="Maximize window"><Svg w={11} h={20}><path d="M.5 7h10v7H.5Z" stroke="#222" /><path d="M0 7h11" stroke="#222" strokeWidth="2" /></Svg></IconButton>
                    <CloseBox aria-label="Close window"><CloseX c="#fff" s={8} sw={2} /></CloseBox>
                  </SimControls>
                </SimTitle>
                <SimBody>
                  <MenuBar>{["File", "Edit", "Add", "Simulation", "Tools", "Plugins", "Add-ons", "Scenes", "Secret", "Help"].map((m) => <button key={m}>{m}</button>)}</MenuBar>
                  <SimTools>
                    <Grip />
                    {["move", "rotate", "updown", "camera", "fit", "fly"].map((n, i) => <ToolButton key={n} $on={i === 0} aria-label={n}><Tool n={n} /></ToolButton>)}
                    <Sep />
                    {["pick", "shift", "spin"].map((n, i) => <ToolButton key={n} $on={i === 0} aria-label={n}><Tool n={n} /></ToolButton>)}
                    <Sep />
                    {["assemble", "transfer"].map((n) => <ToolButton key={n} aria-label={n}><Tool n={n} /></ToolButton>)}
                    <Sep />
                    {["undo", "redo"].map((n) => <ToolButton key={n} aria-label={n}><Tool n={n} /></ToolButton>)}
                    <Sep />
                    <ToolButton $on aria-label="visualize"><Tool n="ball" /></ToolButton>
                    <EngineBox><Engine aria-label="Physics engine"><option>Newton</option></Engine></EngineBox>
                    <IconButton $w={22} aria-label="More tools"><Svg s={9}><path d="M1 1.500l3 3-3 3M5 1.500l3 3-3 3" stroke="#000" strokeWidth="1.500" /></Svg></IconButton>
                  </SimTools>
                  <SimMain>
                    <Side>
                      <Grip $side />
                      <SideSlot $h={42}><Tool n="gear" /></SideSlot><Sep $side />
                      <SideSlot $h={42}><ToolButton $on aria-label="zoom"><Tool n="zoom" /></ToolButton></SideSlot>
                      <SideSlot $h={34}><Fx>f(x)</Fx></SideSlot><Sep $side />
                      <SideSlot $h={44}><Tool n="parts" /></SideSlot>
                      <SideSlot $h={32}><Tool n="doc" s={26} /></SideSlot>
                      <SideSlot $h={36}><Tool n="boxcur" /></SideSlot>
                      <SideSlot $h={36}><Tool n="curve" /></SideSlot>
                      <SideSlot $h={40}><Tool n="panel" /></SideSlot><Sep $side />
                      <SideSlot $h={42}><Tool n="shapes" /></SideSlot>
                      <SideSlot $h={32}><Tool n="person" s={29} /></SideSlot>
                      <SideSlot $h={34}><Svg s={9}><path d="M1.500 1l3 3 3-3M1.500 5l3 3 3-3" stroke="#000" strokeWidth="1.500" /></Svg></SideSlot>
                    </Side>
                    <Hierarchy>
                      <HierarchyHead>Scene hierarchy<IconButton $w={18} $color="#222" aria-label="Close hierarchy"><CloseX s={11} sw={0.9} /></IconButton></HierarchyHead>
                      <TreeArea>
                        <Tree>{nodes.map((n) => <TreeNode key={n[0]} n={n} />)}</Tree>
                        <VBar><VThumb /></VBar>
                      </TreeArea>
                      <HBar><HThumb /></HBar>
                    </Hierarchy>
                    <View3D><Robot /><ViewPin aria-label="View options"><Svg s={6}><rect x=".5" y=".5" width="5" height="5" stroke="#445" /></Svg></ViewPin></View3D>
                  </SimMain>
                </SimBody>
              </Sim>
              <Caption>[Dynamic content visualization &amp; verification]</Caption>
            </Figure>
            <P>
              Finally, we need to prepare the robot so that we can easily attach a gripper to it, or easily attach the robot<br />
              to a mobile platform (for instance). Two dynamically enabled shapes can be rigidly attached to each other<br />
              in two different ways:
            </P>
            <List>
              <li><b>by grouping them</b>: select the shapes, then [Menu bar --&gt; Edit --&gt; Grouping/Merging --&gt; Group<br />selected shapes].</li>
              <li><b>by attaching them via a force/torque sensor</b>: a <Link href="#">force torque sensor</Link> can also act as a rigid link<br />between two separate dynamically enabled shapes.</li>
            </List>
            <P>
              In our case, only option 2 is of interest. We create a force/torque sensor with [Menu bar --&gt; Add --&gt; Force<br />
              sensor], then move it to the tip of the robot, then attach it to object <i>robot_link_dyn6</i>. We change its size<br />
              and visual appearance appropriately (a red force/torque sensor is often perceived as an optional<br />
              attachment point, check the various robot models available). We also change its name to
            </P>
          </Article>
        </Page>
        <Scrollbar>
          <ScrollStep aria-label="Scroll up"><Svg w={7} h={4}><path d="M0 4l3.500-4L7 4Z" fill="#505050" /></Svg></ScrollStep>
          <ScrollTrack><ScrollSpace $grow={758} /><ScrollThumb /><ScrollSpace $grow={103} /></ScrollTrack>
          <ScrollStep aria-label="Scroll down"><Svg w={7} h={4}><path d="M0 0l3.500 4L7 0Z" fill="#505050" /></Svg></ScrollStep>
        </Scrollbar>
      </Viewport>
      <Taskbar>
        <TaskButton $w={48} aria-label="Start"><Svg s={16}><path d="M0 2.200L6.700 1.300V7.600H0ZM7.500 1.200L16 0V7.600H7.500ZM0 8.400H6.700V14.700L0 13.800ZM7.500 8.400H16V16L7.500 14.800Z" fill="#fff" /></Svg></TaskButton>
        <TaskButton $w={48} aria-label="Search"><Svg s={17}><circle cx="10.500" cy="6" r="5" stroke="#fff" strokeWidth="1.300" /><path d="M7 9.800L1 16" stroke="#fff" strokeWidth="1.300" /></Svg></TaskButton>
        <TaskButton $w={48} aria-label="Task view"><Svg w={17} h={16}><path d="M1.500 0v2.500h9V0M1.500 16v-2.500h9V16M1.500 5h9v6h-9ZM14.500 0v4M14.500 8v8" stroke="#fff" strokeWidth="1.200" /><path d="M13 5h3v2.500h-3Z" fill="#fff" /></Svg></TaskButton>
        <Apps>{apps.map(([n, icon, o]) => <TaskButton key={n} $w={49} aria-label={n} {...o}>{icon}</TaskButton>)}</Apps>
        <Tray>
          <IconButton $w={24} aria-label="Hidden icons"><Svg w={12} h={8}><path d="M.5 7L6 1.500 11.500 7" stroke="#fff" strokeWidth="1.200" /></Svg></IconButton>
          <IconButton $w={24} aria-label="Network"><Svg w={17} h={14}><path d="M5.500 1.500h11v8h-13v-4M.5.500h4v4h-4ZM2.500 4.500v3M6 13.500h8M10 10v3" stroke="#fff" /></Svg></IconButton>
          <IconButton $w={24} aria-label="Volume"><Svg w={17} h={15}><path d="M.5 4.500h2l3.500-4v12l-3.500-4h-2Z" stroke="#fff" /><circle cx="12" cy="10" r="4.700" fill="#d9302c" /><path d="M10 8l4 4M14 8l-4 4" stroke="#fff" strokeWidth="1.300" /></Svg></IconButton>
          <IconButton $w={32} aria-label="Touch keyboard"><Svg w={23} h={13}><rect x=".5" y=".5" width="22" height="12" stroke="#fff" /><path d="M3 4h17M3 7h17" stroke="#fff" strokeDasharray="2 1" /><path d="M3 10h2M6 10h11M18 10h2" stroke="#fff" /></Svg></IconButton>
          <IconButton $w={24} aria-label="Security"><Svg s={15}><circle cx="7.500" cy="7.500" r="7" fill="#888d8f" /><path d="M5 5l5 5M10 5l-5 5" stroke="#1a2b30" strokeWidth="1.800" /></Svg></IconButton>
          <IconButton $w={34} aria-label="Input method"><Ime>ㄅ</Ime></IconButton>
          <Clock>上午 09:31<br />2020/1/3</Clock>
          <IconButton $w={28} aria-label="Notifications"><Svg w={17} h={16}><path d="M.5.500h16v12h-6l-2 2.500-2-2.500h-6Z" stroke="#fff" /></Svg></IconButton>
          <DesktopEdge />
        </Tray>
      </Taskbar>
      <PointerLayer><Svg w={12} h={20}><path d="M.5.500v15.500l3.500-3.500 2.300 5.700 2.400-1-2.400-5.500h4.700Z" fill="#fff" stroke="#000" /></Svg></PointerLayer>
    </Screen>
  );
}
